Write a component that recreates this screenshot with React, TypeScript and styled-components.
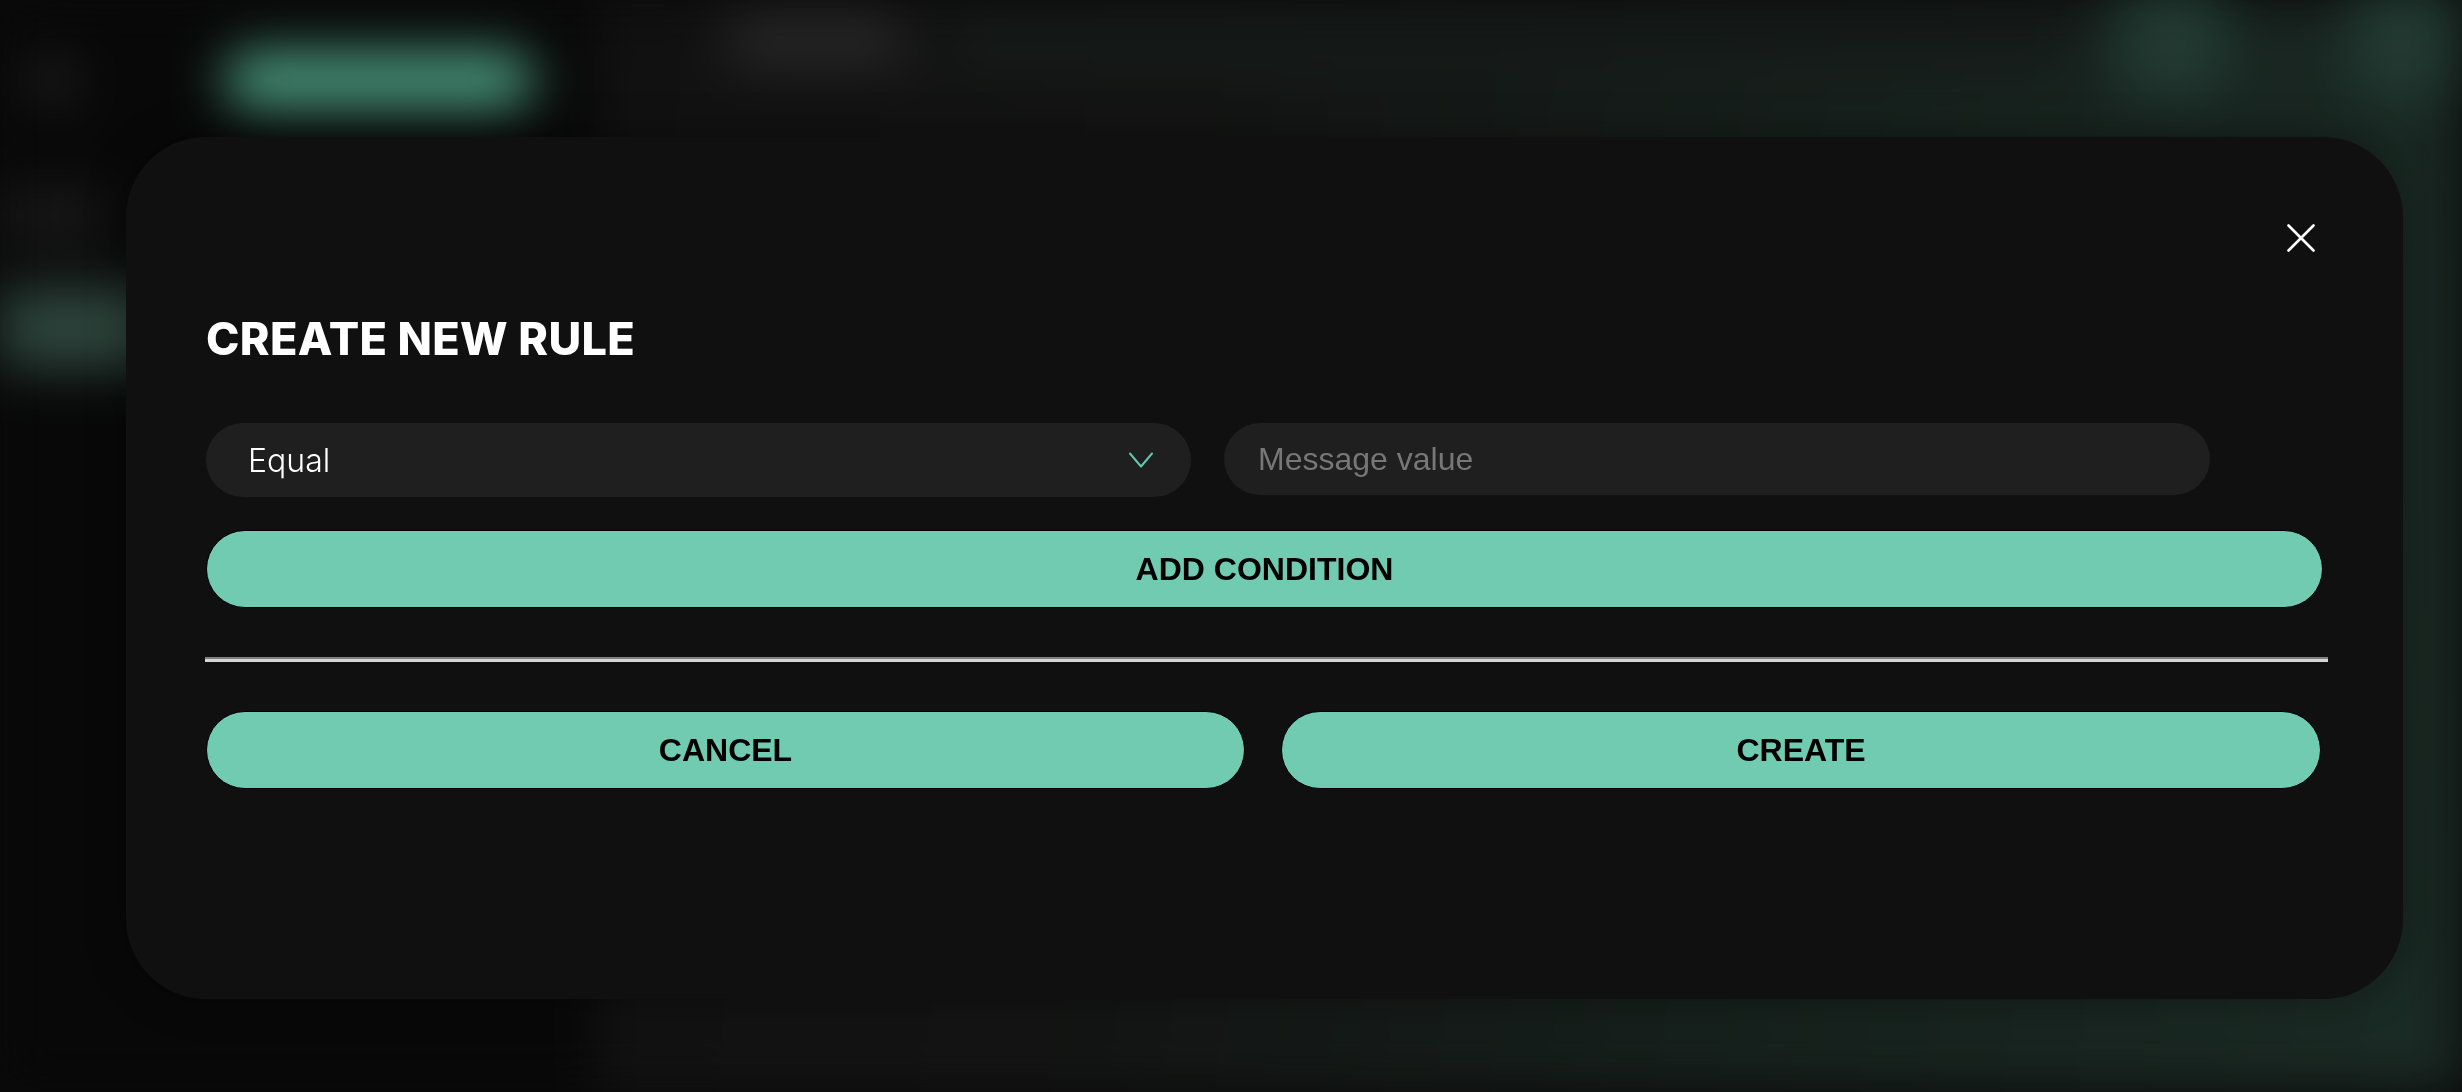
import React from "react";
import styled, { createGlobalStyle } from "styled-components";

const GlobalStyle = createGlobalStyle`
  html, body {
    margin: 0;
    padding: 0;
    width: 2462px;
    height: 1092px;
    overflow: hidden;
    background: #0a0a0a;
    font-family: "Inter", "Liberation Sans", sans-serif;
  }
  * { box-sizing: border-box; }
`;

/* ---------- blurred dashboard behind the dialog ---------- */

const Backdrop = styled.div`
  width: 2462px;
  height: 1092px;
  display: flex;
  filter: blur(26px);
  background: #0a0a0a;
`;

const Sidebar = styled.aside`
  width: 595px;
  flex: none;
  background: #080808;
  display: flex;
  flex-direction: column;
  padding-top: 52px;
`;

const SideTop = styled.div`
  display: flex;
  align-items: center;
  gap: 150px;
  padding-left: 30px;
`;

const LogoBlob = styled.div`
  width: 44px;
  height: 44px;
  border-radius: 50%;
  background: #262626;
`;

const SideButton = styled.div`
  width: 310px;
  height: 56px;
  border-radius: 28px;
  background: #4a9a7f;
`;

const NavItem = styled.div<{ $active?: boolean }>`
  height: ${(p) => (p.$active ? "80px" : "56px")};
  margin-top: ${(p) => (p.$active ? "44px" : "80px")};
  background: ${(p) => (p.$active ? "#2e463d" : "#181818")};
  width: ${(p) => (p.$active ? "560px" : "110px")};
  border-radius: 0 20px 20px 0;
`;

const Main = styled.main`
  flex: 1;
  display: flex;
  flex-direction: column;
  background: linear-gradient(100deg, #111111 0%, #131413 30%, #16201c 62%, #1b2b25 100%);
`;

const TopBar = styled.div`
  height: 120px;
  display: flex;
  align-items: center;
  padding: 0 0 40px 130px;
  gap: 40px;
`;

const SearchBlob = styled.div`
  width: 180px;
  height: 46px;
  border-radius: 23px;
  background: #2a2a2a;
`;

const BarFill = styled.div`
  flex: 1;
  height: 60px;
  border-radius: 30px;
  background: #151a18;
`;

const IconBlob = styled.div<{ $after?: number }>`
  width: 110px;
  height: 110px;
  border-radius: 20px;
  background: #223a32;
  margin-right: ${(p) => p.$after ?? 0}px;
`;

const MainBody = styled.div`
  flex: 1;
`;

/* ---------- dialog ---------- */

const Overlay = styled.div`
  position: fixed;
  inset: 0;
  display: flex;
  align-items: flex-start;
  padding: 137px 0 0 126px;
`;

const Modal = styled.section`
  width: 2277px;
  height: 862px;
  background: #101010;
  border-radius: 80px;
  padding: 87px 80px 0 80px;
  display: flex;
  flex-direction: column;
  box-shadow: 0 0 40px rgba(0, 0, 0, 0.35);
`;

const CloseRow = styled.div`
  display: flex;
  justify-content: flex-end;
  padding-right: 8px;
  height: 28px;
`;

const CloseButton = styled.button`
  width: 28px;
  height: 28px;
  padding: 0;
  border: none;
  background: transparent;
  display: flex;
  cursor: pointer;
`;

const Title = styled.h2`
  margin: 64px 0 0 0;
  font-family: "Inter", "Liberation Sans", sans-serif;
  font-weight: 800;
  font-size: 45px;
  line-height: 45px;
  color: #ffffff;
  letter-spacing: 0.35px;
`;

const FieldRow = styled.div`
  margin-top: 62px;
  display: grid;
  grid-template-columns: 985px 986px;
  column-gap: 33px;
  align-items: start;
`;

const SelectBox = styled.div`
  height: 74px;
  border-radius: 37px;
  background: #1f1f1f;
  display: flex;
  align-items: center;
  justify-content: space-between;
  padding: 0 38px 0 42px;
  cursor: pointer;
`;

const SelectValue = styled.span`
  font-family: "Inter", "Liberation Sans", sans-serif;
  font-weight: 300;
  font-size: 32px;
  color: #ffffff;
`;

const TextInput = styled.input`
  height: 72px;
  border-radius: 36px;
  background: #1f1f1f;
  border: none;
  outline: none;
  padding: 0 34px;
  font-family: "Liberation Sans", Arial, sans-serif;
  font-size: 32px;
  color: #ffffff;
  &::placeholder {
    color: #777777;
  }
`;

const PillButton = styled.button`
  height: 78px;
  width: 100%;
  border-radius: 39px;
  background: #71cbb0;
  border: 1.5px solid #000000;
  font-family: "Liberation Sans", Arial, sans-serif;
  font-weight: 700;
  font-size: 32px;
  color: #000000;
  cursor: pointer;
  display: flex;
  align-items: center;
  justify-content: center;
  padding: 0;
`;

const AddWrap = styled.div`
  margin-top: 33px;
`;

const Divider = styled.hr`
  margin: 49px -5px 0 -1px;
  height: 0;
  border: none;
  border-top: 2px solid #7f7f7f;
  border-bottom: 3px solid #d6d6d6;
`;

const ActionRow = styled.div`
  margin-top: 49px;
  display: grid;
  grid-template-columns: 1039px 1040px;
  column-gap: 36px;
`;

const ChevronIcon = () => (
  <svg width="24" height="16" viewBox="0 0 24 16" fill="none">
    <polyline
      points="1,1.5 12,14.5 23,1.5"
      stroke="#5fc9a8"
      strokeWidth="2"
      strokeLinecap="round"
      strokeLinejoin="round"
    />
  </svg>
);

const CloseIcon = () => (
  <svg width="28" height="28" viewBox="0 0 28 28" fill="none">
    <line x1="1.5" y1="1.5" x2="26.5" y2="26.5" stroke="#ffffff" strokeWidth="2.6" strokeLinecap="round" />
    <line x1="26.5" y1="1.5" x2="1.5" y2="26.5" stroke="#ffffff" strokeWidth="2.6" strokeLinecap="round" />
  </svg>
);

export default function App() {
  return (
    <>
      <GlobalStyle />
      <Backdrop aria-hidden>
        <Sidebar>
          <SideTop>
            <LogoBlob />
            <SideButton />
          </SideTop>
          <NavItem />
          <NavItem $active />
        </Sidebar>
        <Main>
          <TopBar>
            <SearchBlob />
            <BarFill />
            <IconBlob $after={85} />
            <IconBlob />
          </TopBar>
          <MainBody />
        </Main>
      </Backdrop>
      <Overlay>
        <Modal role="dialog" aria-label="Create new rule">
          <CloseRow>
            <CloseButton aria-label="Close">
              <CloseIcon />
            </CloseButton>
          </CloseRow>
          <Title>CREATE NEW RULE</Title>
          <FieldRow>
            <SelectBox>
              <SelectValue>Equal</SelectValue>
              <ChevronIcon />
            </SelectBox>
            <TextInput placeholder="Message value" />
          </FieldRow>
          <AddWrap>
            <PillButton>ADD CONDITION</PillButton>
          </AddWrap>
          <Divider />
          <ActionRow>
            <PillButton>CANCEL</PillButton>
            <PillButton>CREATE</PillButton>
          </ActionRow>
        </Modal>
      </Overlay>
    </>
  );
}
